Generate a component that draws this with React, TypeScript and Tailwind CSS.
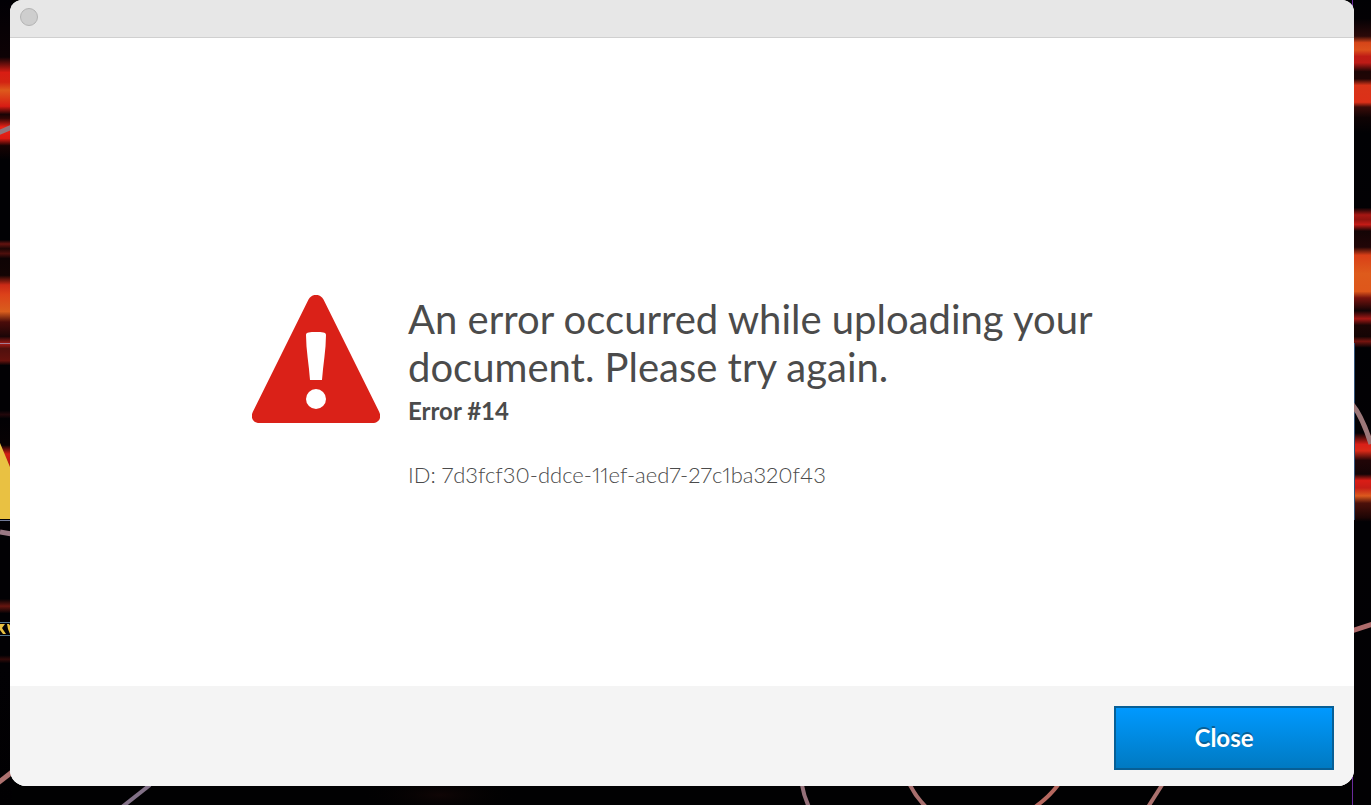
const LeftBackdrop = () => (
  <svg
    className="absolute left-0 top-0"
    width="12"
    height="805"
    viewBox="0 0 12 805"
    aria-hidden="true"
  >
    <defs>
      <linearGradient id="left-glow" gradientUnits="userSpaceOnUse" x1="0" y1="0" x2="0" y2="805">
        <stop offset="0" stopColor="#010005" />
        <stop offset="0.071" stopColor="#0d0205" />
        <stop offset="0.09" stopColor="#d91d13" />
        <stop offset="0.102" stopColor="#d32412" />
        <stop offset="0.112" stopColor="#dd5a1c" />
        <stop offset="0.132" stopColor="#d81c14" />
        <stop offset="0.142" stopColor="#180405" />
        <stop offset="0.147" stopColor="#300605" />
        <stop offset="0.158" stopColor="#ee2417" />
        <stop offset="0.172" stopColor="#dc1b12" />
        <stop offset="0.181" stopColor="#180303" />
        <stop offset="0.199" stopColor="#010104" />
        <stop offset="0.298" stopColor="#010104" />
        <stop offset="0.303" stopColor="#641310" />
        <stop offset="0.309" stopColor="#1d0605" />
        <stop offset="0.315" stopColor="#4d0f0c" />
        <stop offset="0.321" stopColor="#0e0304" />
        <stop offset="0.342" stopColor="#120404" />
        <stop offset="0.354" stopColor="#cb2a16" />
        <stop offset="0.366" stopColor="#dc421a" />
        <stop offset="0.387" stopColor="#d95e1d" />
        <stop offset="0.4" stopColor="#4a0c0a" />
        <stop offset="0.418" stopColor="#1b0507" />
        <stop offset="0.427" stopColor="#a51c16" />
        <stop offset="0.433" stopColor="#50100d" />
        <stop offset="0.448" stopColor="#65120d" />
        <stop offset="0.454" stopColor="#020104" />
        <stop offset="0.51" stopColor="#020104" />
        <stop offset="0.515" stopColor="#21070b" />
        <stop offset="0.52" stopColor="#020104" />
        <stop offset="0.553" stopColor="#080204" />
        <stop offset="0.564" stopColor="#d21e14" />
        <stop offset="0.578" stopColor="#b31a12" />
        <stop offset="0.59" stopColor="#020104" />
        <stop offset="0.744" stopColor="#020104" />
        <stop offset="0.753" stopColor="#671610" />
        <stop offset="0.762" stopColor="#020104" />
        <stop offset="0.814" stopColor="#020104" />
        <stop offset="0.819" stopColor="#310a09" />
        <stop offset="0.824" stopColor="#020104" />
        <stop offset="1" stopColor="#010002" />
      </linearGradient>
    </defs>
    <rect width="12" height="805" fill="url(#left-glow)" />
    <path d="M-2 133L12 127" stroke="#92787e" strokeWidth="5" />
    <path d="M0 343.5H12" stroke="#a47c95" strokeWidth="1" />
    <path d="M0 443L10 467V519H0Z" fill="#e9c142" />
    <path d="M0 520.5H12" stroke="#717b99" strokeWidth="1" />
    <path d="M0 532L12 534" stroke="#9a7884" strokeWidth="5" />
    <path d="M0 622.5H12M0 635.5H12" stroke="#55758c" strokeWidth="1" />
    <path
      d="M0 624H5L2 628L6 634H3L0 630ZM7 624H9L12 629V634H10L8 629Z"
      fill="#e9c142"
    />
    <path d="M-2 783L12 772" stroke="#ad716f" strokeWidth="5" />
  </svg>
);

const RightBackdrop = () => (
  <svg
    className="absolute right-0 top-0"
    width="20"
    height="805"
    viewBox="0 0 20 805"
    aria-hidden="true"
  >
    <defs>
      <linearGradient id="right-glow" gradientUnits="userSpaceOnUse" x1="0" y1="0" x2="0" y2="805">
        <stop offset="0" stopColor="#010104" />
        <stop offset="0.023" stopColor="#030104" />
        <stop offset="0.045" stopColor="#2b0909" />
        <stop offset="0.053" stopColor="#d64519" />
        <stop offset="0.062" stopColor="#dc511c" />
        <stop offset="0.07" stopColor="#bf1c15" />
        <stop offset="0.078" stopColor="#bd1b16" />
        <stop offset="0.089" stopColor="#1c0505" />
        <stop offset="0.098" stopColor="#210505" />
        <stop offset="0.106" stopColor="#d93418" />
        <stop offset="0.127" stopColor="#dc3018" />
        <stop offset="0.133" stopColor="#3b0c09" />
        <stop offset="0.146" stopColor="#0f0304" />
        <stop offset="0.165" stopColor="#010104" />
        <stop offset="0.258" stopColor="#020104" />
        <stop offset="0.267" stopColor="#a61713" />
        <stop offset="0.273" stopColor="#921410" />
        <stop offset="0.279" stopColor="#c41b16" />
        <stop offset="0.287" stopColor="#140405" />
        <stop offset="0.307" stopColor="#210507" />
        <stop offset="0.317" stopColor="#d93f17" />
        <stop offset="0.34" stopColor="#de5b1c" />
        <stop offset="0.362" stopColor="#de571b" />
        <stop offset="0.37" stopColor="#78130e" />
        <stop offset="0.386" stopColor="#120406" />
        <stop offset="0.396" stopColor="#a61815" />
        <stop offset="0.404" stopColor="#1b0505" />
        <stop offset="0.418" stopColor="#140404" />
        <stop offset="0.424" stopColor="#75140f" />
        <stop offset="0.432" stopColor="#010104" />
        <stop offset="0.538" stopColor="#030104" />
        <stop offset="0.552" stopColor="#d91f17" />
        <stop offset="0.56" stopColor="#d92a18" />
        <stop offset="0.572" stopColor="#210507" />
        <stop offset="0.589" stopColor="#140406" />
        <stop offset="0.597" stopColor="#da1d16" />
        <stop offset="0.606" stopColor="#c61d16" />
        <stop offset="0.616" stopColor="#dc5a1e" />
        <stop offset="0.625" stopColor="#4c100a" />
        <stop offset="0.643" stopColor="#1d0505" />
        <stop offset="0.648" stopColor="#020104" />
        <stop offset="1" stopColor="#020103" />
      </linearGradient>
    </defs>
    <rect width="20" height="805" fill="url(#right-glow)" />
    <path d="M1.5 0V22M1.5 770V805" stroke="#6a2b9d" strokeWidth="1" />
    <path d="M3.5 343V520" stroke="#35547a" strokeWidth="1" />
    <path d="M1 404Q11 416 20 444" fill="none" stroke="#9b7779" strokeWidth="5" />
    <path d="M0 631L22 624" stroke="#ae6b6b" strokeWidth="5" />
  </svg>
);

const BottomBackdrop = () => (
  <svg
    className="absolute bottom-0 left-0"
    width="1340"
    height="20"
    viewBox="0 0 1340 20"
    aria-hidden="true"
  >
    <defs>
      <radialGradient id="floor-glow">
        <stop offset="0" stopColor="#0f0505" />
        <stop offset="1" stopColor="#010101" stopOpacity="0" />
      </radialGradient>
    </defs>
    <ellipse cx="440" cy="10" rx="80" ry="20" fill="url(#floor-glow)" />
    <g fill="none" strokeWidth="4">
      <path d="M150 0L122 22" stroke="#827187" />
      <path d="M802 0Q804 12 809 22" stroke="#957079" />
      <path d="M910 0Q916 12 926 22" stroke="#a76e6d" />
      <path d="M1058 0Q1049 12 1035 22" stroke="#b5685f" />
      <path d="M1162 0L1148 22" stroke="#ab716e" />
    </g>
  </svg>
);

const WarningIcon = () => (
  <svg
    className="shrink-0"
    width="128"
    height="128"
    viewBox="0 0 128 128"
    aria-hidden="true"
  >
    <path
      d="M56.500 4.500C60 -1.700 68 -1.700 71.500 4.500L127 116.500C130 122.500 127 128 120.500 128H7.500C1 128 -2 122.500 1 116.500Z"
      fill="#da2118"
    />
    <path
      d="M54 40C54 37 58 37 64 37C70 37 74 37 74 40C74 55 71 70 70 85H58C57 70 54 55 54 40Z"
      fill="#fff"
    />
    <circle cx="64" cy="104" r="10" fill="#fff" />
  </svg>
);

const App = () => {
  return (
    <div className="relative flex min-h-screen w-full flex-col overflow-hidden bg-[#010102] pb-[19px] pl-[10px] pr-[17px] font-['Lato',sans-serif] text-[#4b4b4b]">
      <LeftBackdrop />
      <RightBackdrop />
      <BottomBackdrop />

      <div
        className="relative flex flex-1 flex-col overflow-hidden rounded-b-2xl rounded-t-xl bg-white"
        role="alertdialog"
        aria-labelledby="error-title"
        aria-describedby="error-details"
      >
        {/* Title bar */}
        <header className="flex h-[38px] items-center border-b border-[#d0d0d0] bg-[#e7e7e7] px-[10px] pb-1">
          <button
            className="h-[18px] w-[18px] rounded-full border border-[#b3b3b3] bg-[#cecece]"
            type="button"
            aria-label="Close window"
          />
        </header>

        {/* Message */}
        <main className="flex flex-1 items-center justify-center px-8 pt-[62px]">
          <div className="flex w-full max-w-[860px] items-start gap-7">
            <WarningIcon />
            <div className="flex-1">
              <h1 id="error-title" className="text-[40px] leading-[48px]">
                An error occurred while uploading your
                <br />
                document. Please try again.
              </h1>
              <div id="error-details">
                <p className="text-2xl font-bold leading-10">Error #14</p>
                <p className="mt-7 text-[22px] font-light leading-8 proportional-nums">
                  ID: 7d3fcf30-ddce-11ef-aed7-27c1ba320f43
                </p>
              </div>
            </div>
          </div>
        </main>

        <footer className="flex justify-end bg-[#f4f4f4] px-5 pb-4 pt-5">
          <button
            className="h-16 w-[220px] border-2 border-[#075f96] bg-linear-to-b from-[#0099ff] to-[#007ac2] text-2xl font-bold text-white [text-shadow:0_-2px_0_#075f96]"
            type="button"
          >
            Close
          </button>
        </footer>
      </div>
    </div>
  );
};

export default App;
